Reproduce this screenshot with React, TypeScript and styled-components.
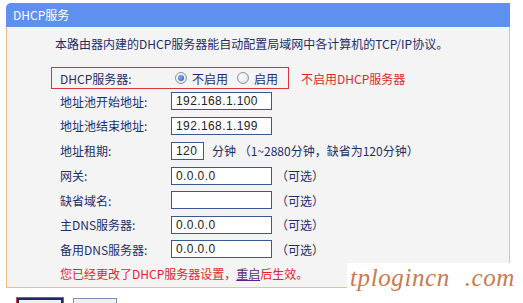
import React from 'react';
import styled, { createGlobalStyle } from 'styled-components';

const Global = createGlobalStyle`
  html, body { margin: 0; padding: 0; background: #ffffff; }
  body {
    font-family: "Noto Sans CJK SC", "DejaVu Sans", sans-serif;
    font-size: 12px;
    color: #1e2d6b;
  }
`;

const Page = styled.div`
  position: relative;
  width: 523px;
  height: 303px;
  overflow: hidden;
  box-sizing: border-box;
  padding: 3px 0 0 6px;
`;

const Panel = styled.div`
  width: 504px;
`;

const Header = styled.div`
  height: 24px;
  background: #5e90f0;
  color: #ffffff;
  border-top-left-radius: 5px;
  display: flex;
  align-items: center;
  padding-left: 7px;
  font-size: 12px;
  line-height: 14px;
`;

const Body = styled.div`
  height: 261px;
  box-sizing: border-box;
  background: #f4f4f4;
  border: 1px solid #f2bf7c;
  border-top: none;
  padding: 10px 0 0 44px;
`;

const Intro = styled.div`
  margin-left: 4px;
  line-height: 14px;
  height: 14px;
  white-space: nowrap;
`;

const Form = styled.div`
  margin-top: 16px;
  display: flex;
  flex-direction: column;
`;

const TopRow = styled.div`
  display: flex;
  align-items: center;
  height: 22px;
`;

const RedBox = styled.div`
  width: 238px;
  height: 22px;
  box-sizing: border-box;
  border: 1px solid #d9363c;
  display: flex;
  align-items: center;
  padding-left: 8px;
`;

const Note = styled.span<{ $gap?: number }>`
  color: #e2262c;
  margin-left: ${(p) => p.$gap ?? 12}px;
  white-space: nowrap;
`;

const Row = styled.div<{ $h?: number }>`
  display: flex;
  align-items: center;
  height: ${(p) => p.$h ?? 24.5}px;
  padding-left: 9px;
`;

const Label = styled.span`
  width: 111px;
  flex: none;
  white-space: nowrap;
`;

const Radio = styled.span<{ $on?: boolean }>`
  width: 12px;
  height: 12px;
  box-sizing: border-box;
  border-radius: 50%;
  border: 1px solid #8e959c;
  background: radial-gradient(circle at 35% 35%, #ffffff 0%, #e6e8ea 60%, #c9cdd2 100%);
  display: inline-flex;
  align-items: center;
  justify-content: center;
  margin-left: ${(p) => (p.$on ? 4 : 9)}px;
  &::after {
    content: '';
    width: 6px;
    height: 6px;
    border-radius: 50%;
    background: ${(p) => (p.$on ? 'radial-gradient(circle at 40% 40%, #7fb0ff, #1f4fb8)' : 'transparent')};
  }
`;

const RadioText = styled.span`
  margin-left: 5px;
`;

const Input = styled.div<{ $w?: number }>`
  width: ${(p) => p.$w ?? 101}px;
  height: 18px;
  box-sizing: border-box;
  border: 1px solid #3a5894;
  background: #ffffff;
  display: flex;
  align-items: center;
  padding-left: 4px;
  font-family: "Liberation Sans", Arial, sans-serif;
  font-size: 12px;
  color: #222222;
  letter-spacing: 0.4px;
  flex: none;
`;

const Hint = styled.span<{ $gap?: number }>`
  margin-left: ${(p) => p.$gap ?? 4}px;
  white-space: nowrap;
`;

const Message = styled.div`
  height: 24px;
  display: flex;
  align-items: center;
  padding-left: 9px;
  color: #e2262c;
  white-space: nowrap;
`;

const Link = styled.span`
  color: #5b1e86;
  text-decoration: underline;
`;

const Buttons = styled.div`
  display: flex;
  gap: 10px;
  margin: 10px 0 0 11px;
`;

const Btn = styled.div<{ $primary?: boolean }>`
  width: ${(p) => (p.$primary ? 46 : 44)}px;
  height: 20px;
  box-sizing: border-box;
  border: ${(p) => (p.$primary ? '2px solid #1b2a66' : '1px solid #7c90b6')};
  outline: ${(p) => (p.$primary ? '1px solid #e03a3a' : 'none')};
  background: #eef0f4;
`;

const Watermark = styled.div`
  position: absolute;
  left: 347px;
  top: 263px;
  right: 0;
  bottom: 0;
  background: #ffffff;
  padding-left: 3px;
  font-family: "Liberation Serif", "DejaVu Serif", serif;
  font-style: italic;
  font-size: 25px;
  line-height: 30px;
  color: #c97a4e;
  white-space: nowrap;
  letter-spacing: 0.6px;
  word-spacing: 8px;
`;

const fields: { label: string; value: string; hint?: string }[] = [
  { label: '网关:', value: '0.0.0.0', hint: '（可选）' },
  { label: '缺省域名:', value: '', hint: '（可选）' },
  { label: '主DNS服务器:', value: '0.0.0.0', hint: '（可选）' },
  { label: '备用DNS服务器:', value: '0.0.0.0', hint: '（可选）' },
];

export default function App() {
  return (
    <>
      <Global />
      <Page>
        <Panel>
          <Header>DHCP服务</Header>
          <Body>
            <Intro>本路由器内建的DHCP服务器能自动配置局域网中各计算机的TCP/IP协议。</Intro>
            <Form>
              <TopRow>
                <RedBox>
                  <Label>DHCP服务器:</Label>
                  <Radio $on />
                  <RadioText>不启用</RadioText>
                  <Radio />
                  <RadioText>启用</RadioText>
                </RedBox>
                <Note>不启用DHCP服务器</Note>
              </TopRow>
              <Row>
                <Label>地址池开始地址:</Label>
                <Input>192.168.1.100</Input>
              </Row>
              <Row>
                <Label>地址池结束地址:</Label>
                <Input>192.168.1.199</Input>
              </Row>
              <Row $h={25.5}>
                <Label>地址租期:</Label>
                <Input $w={33}>120</Input>
                <Hint $gap={8}>分钟 （1~2880分钟，缺省为120分钟）</Hint>
              </Row>
              {fields.map((f) => (
                <Row key={f.label}>
                  <Label>{f.label}</Label>
                  <Input>{f.value}</Input>
                  <Hint>{f.hint}</Hint>
                </Row>
              ))}
              <Message>
                您已经更改了DHCP服务器设置，<Link>重启</Link>后生效。
              </Message>
            </Form>
          </Body>
        </Panel>
        <Buttons>
          <Btn $primary />
          <Btn />
        </Buttons>
        <Watermark>tplogincn .com</Watermark>
      </Page>
    </>
  );
}
